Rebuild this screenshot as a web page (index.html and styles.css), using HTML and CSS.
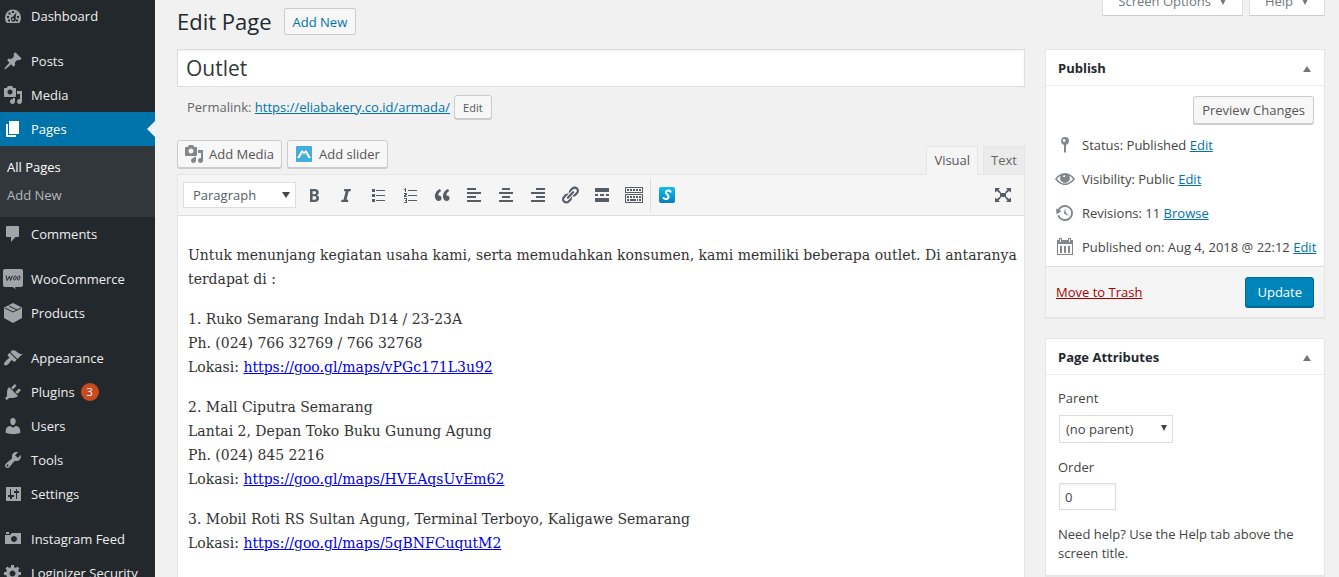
FILE: index.html
```html
<!DOCTYPE html>
<html lang="en">
<head>
<meta charset="utf-8">
<title>Edit Page</title>
<link rel="stylesheet" href="styles.css">
</head>
<body>
<div class="shell">
  <nav class="menu" aria-label="Main menu">
    <ul class="menu-list">
      <li><a class="menu-item" href="#"><svg class="icon" viewBox="0 0 20 20"><path fill-rule="evenodd" d="M3.800 17h12.400c1.300-1.600 1.800-3.400 1.800-5.500a8 8 0 0 0-16 0c0 2.100.4 3.900 1.800 5.500zM9 5h2v2H9zM5.500 6.500h2v2h-2zM4 10h2v2H4zM14 10h2v2h-2zM5 13.500h2v2H5zM13 13.500h2v2h-2zM13.500 6l-3.500 4.800a2.400 2.400 0 1 0 2.500 1.200zM10 12.300a1 1 0 1 1-.1 0z"/></svg>Dashboard</a></li>
      <li class="gap"><a class="menu-item" href="#"><svg class="icon" viewBox="0 0 20 20"><path d="M10.440 3.020l1.820-1.820 6.360 6.350-1.830 1.820c-1.050-.68-2.480-.57-3.410.36l-.75.75c-.92.93-1.040 2.350-.35 3.410l-1.830 1.820-2.410-2.410-2.800 2.790c-.42.42-3.380 2.710-3.800 2.290s1.860-3.390 2.280-3.810l2.790-2.790L4.100 9.360l1.830-1.820c1.050.69 2.480.57 3.400-.36l.75-.75c.93-.92 1.050-2.350.36-3.410z"/></svg>Posts</a></li>
      <li><a class="menu-item" href="#"><svg class="icon" viewBox="0 0 20 20"><use href="#media"/></svg>Media</a></li>
      <li>
        <a class="menu-item current" href="#"><svg class="icon" viewBox="0 0 20 20"><path d="M6 15V2h10v13H6zm-1 1h8v2H3V5h2v11z"/></svg>Pages</a>
        <ul class="submenu">
          <li><a class="active" href="#">All Pages</a></li>
          <li><a href="#">Add New</a></li>
        </ul>
      </li>
      <li><a class="menu-item" href="#"><svg class="icon" viewBox="0 0 20 20"><path d="M4 2h11c.6 0 1 .4 1 1v9c0 .6-.4 1-1 1h-2.500L8 18v-5H4c-.6 0-1-.4-1-1V3c0-.6.4-1 1-1z"/></svg>Comments</a></li>
      <li class="gap"><a class="menu-item" href="#"><svg class="icon" viewBox="0 0 20 20"><path d="M2 0h16a2 2 0 0 1 2 2v14a2 2 0 0 1-2 2h-6l1 2-3.500-2H2a2 2 0 0 1-2-2V2a2 2 0 0 1 2-2z"/><path class="woo" d="M3 6.500l1.200 5L6.500 7l1 4.500L9.500 6.500M12.500 7c-2 0-2.500 4-1 4s2.500-4 1-4zM16.300 7c-2 0-2.500 4-1 4s2.500-4 1-4z"/></svg>WooCommerce</a></li>
      <li><a class="menu-item" href="#"><svg class="icon" viewBox="0 0 20 20"><path d="M10 0l9 4.500v10.500L10 20l-9-5V4.500z"/><path class="seam" d="M2 5l8 4 8-4M6 3l8 4"/></svg>Products</a></li>
      <li class="gap"><a class="menu-item" href="#"><svg class="icon" viewBox="0 0 20 20"><path d="M14.480 11.060L7.410 3.990l1.500-1.500c.5-.56 2.300-.47 3.510.32 1.210.8 1.430 1.280 2.910 2.100 1.180.64 2.450 1.260 4.450.85zm-.71.71L6.700 4.700 4.930 6.470c-.39.39-.39 1.020 0 1.410l1.060 1.060c.39.39.39 1.030 0 1.420-.6.6-1.430 1.110-2.210 1.690-.35.26-.7.53-1.010.84C1.430 14.230.4 16.080 1.400 17.070c.99 1 2.840-.03 4.180-1.360.31-.31.58-.66.85-1.020.57-.78 1.080-1.610 1.690-2.210.39-.39 1.020-.39 1.410 0l1.060 1.060c.39.39 1.020.39 1.410 0z"/></svg>Appearance</a></li>
      <li><a class="menu-item" href="#"><svg class="icon" viewBox="0 0 20 20"><path d="M13.110 4.360L9.870 7.600 8 5.730l3.240-3.240c.35-.34 1.050-.2 1.560.32.52.51.66 1.210.31 1.550zm-8 1.770l.91-1.120 9.010 9.010-1.190.84c-.71.71-2.630 1.160-3.820 1.160H6.140L4.900 17.260c-.59.59-1.540.59-2.120 0-.59-.58-.59-1.530 0-2.120l1.240-1.240v-3.880c0-1.130.4-3.190 1.090-3.890zm7.260 3.970l3.240-3.240c.34-.35 1.040-.21 1.550.31.52.51.66 1.210.31 1.550l-3.240 3.250z"/></svg>Plugins<span class="count">3</span></a></li>
      <li><a class="menu-item" href="#"><svg class="icon" viewBox="0 0 20 20"><path d="M10 9.250c-2.270 0-2.730-3.440-2.730-3.440C7 4.020 7.820 2 9.970 2c2.160 0 2.980 2.020 2.710 3.810 0 0-.41 3.440-2.680 3.440zm0 2.570L12.720 10c2.390 0 4.520 2.330 4.520 4.530v2.490s-3.650 1.130-7.240 1.130c-3.650 0-7.240-1.130-7.240-1.130v-2.490c0-2.250 1.940-4.480 4.470-4.480z"/></svg>Users</a></li>
      <li><a class="menu-item" href="#"><svg class="icon" viewBox="0 0 20 20"><path fill-rule="evenodd" d="M16.680 9.770c-1.340 1.340-3.300 1.670-4.950.99l-5.410 6.520c-.99.99-2.590.99-3.580 0s-.99-2.590 0-3.570l6.520-5.420c-.68-1.650-.35-3.610.99-4.950 1.280-1.280 3.120-1.620 4.720-1.060l-2.890 2.890 2.820 2.820 2.860-2.870c.53 1.580.18 3.390-1.080 4.650zM3.810 16.210c.4.39 1.040.39 1.430 0 .4-.4.4-1.040 0-1.430-.39-.4-1.030-.4-1.430 0-.39.39-.39 1.030 0 1.430z"/></svg>Tools</a></li>
      <li><a class="menu-item" href="#"><svg class="icon" viewBox="0 0 20 20"><path fill-rule="evenodd" d="M3 3h15v14H3zM7 5v6H5v2h2v2h2v-2h2v-2H8V5zM13 5v2h-2v2h2v6h1V9h2V7h-2V5z"/></svg>Settings</a></li>
      <li class="gap"><a class="menu-item" href="#"><svg class="icon" viewBox="0 0 20 20"><path fill-rule="evenodd" d="M6 5V3H3v2h3zm12 10V4H9L7 6H2v9h16zm-7-8c1.660 0 3 1.340 3 3s-1.340 3-3 3-3-1.340-3-3 1.340-3 3-3z"/></svg>Instagram Feed</a></li>
      <li><a class="menu-item" href="#"><svg class="icon" viewBox="0 0 20 20"><path fill-rule="evenodd" d="M18 12h-2.180c-.17.7-.44 1.350-.81 1.930l1.540 1.540-2.100 2.100-1.540-1.540c-.58.36-1.230.63-1.910.79V19H8v-2.180c-.68-.16-1.330-.43-1.910-.79l-1.540 1.540-2.120-2.120 1.540-1.540c-.36-.58-.63-1.230-.79-1.910H1V9.030h2.170c.16-.7.44-1.350.8-1.940L2.430 5.550l2.100-2.100 1.540 1.540c.58-.37 1.240-.64 1.930-.81V2h3v2.180c.68.16 1.330.43 1.910.79l1.540-1.540 2.120 2.120-1.540 1.540c.36.59.64 1.240.8 1.940H18V12zm-8.500 1.500c1.660 0 3-1.340 3-3s-1.340-3-3-3-3 1.340-3 3 1.340 3 3 3z"/></svg>Loginizer Security</a></li>
    </ul>
  </nav>

  <main class="main">
    <header class="page-head">
      <h1>Edit Page</h1>
      <a class="add-new" href="#">Add New</a>
      <div class="screen-tabs">
        <button type="button">Screen Options <svg class="tri" viewBox="0 0 8 8"><path d="M1 1h6L4 7z"/></svg></button>
        <button type="button">Help <svg class="tri" viewBox="0 0 8 8"><path d="M1 1h6L4 7z"/></svg></button>
      </div>
    </header>

    <div class="columns">
      <section class="content">
        <input class="title-input" type="text" value="Outlet" aria-label="Page title">
        <div class="permalink">
          <span>Permalink: <a href="#">https://eliabakery.co.id/armada/</a></span>
          <button class="button small" type="button">Edit</button>
        </div>

        <div class="editor-tools">
          <button class="button" type="button"><svg class="icon" viewBox="0 0 20 20"><path id="media" fill-rule="evenodd" d="M13 11V4c0-.55-.45-1-1-1h-1.670L9 1H5L3.670 3H2c-.55 0-1 .45-1 1v7c0 .55.45 1 1 1h10c.55 0 1-.45 1-1zM7 4.500c1.380 0 2.500 1.120 2.500 2.500S8.380 9.500 7 9.500 4.500 8.380 4.500 7 5.620 4.500 7 4.500zM14 6h5v10.500c0 1.380-1.120 2.500-2.500 2.500S14 17.880 14 16.500s1.120-2.500 2.500-2.500c.17 0 .34.02.5.05V9h-3V6zm-4 8.050V13h2v3.500c0 1.380-1.120 2.500-2.500 2.500S7 17.880 7 16.500 8.120 14 9.500 14c.17 0 .34.02.5.05z"/></svg>Add Media</button>
          <button class="button" type="button"><svg class="icon" viewBox="0 0 20 20"><rect x="2" y="2" width="16" height="16" rx="1" fill="#43addb"/><path d="M3 14l5-8 2 2 2-2 5 8h-3l-3-5-1 2-1-2-3 5z" fill="#fff"/><path d="M6 14l3-5M14 14l-3-5" stroke="#43addb" fill="none"/></svg>Add slider</button>
          <div class="mode-tabs">
            <button class="selected" type="button">Visual</button>
            <button type="button">Text</button>
          </div>
        </div>

        <div class="editor">
          <div class="toolbar">
            <div class="select-wrap format">
              <select aria-label="Format"><option>Paragraph</option></select>
              <svg class="tri" viewBox="0 0 8 8"><path d="M0 1h8L4 7z"/></svg>
            </div>
            <button type="button" aria-label="Bold"><svg viewBox="0 0 20 20"><path fill-rule="evenodd" d="M6 4v13h4.540c1.370 0 2.460-.33 3.260-1 .8-.66 1.200-1.580 1.200-2.770 0-.84-.17-1.510-.51-2.010s-.9-.85-1.670-1.030v-.09c.57-.1 1.020-.4 1.360-.9s.51-1.130.51-1.910c0-1.140-.39-1.980-1.170-2.500C12.750 4.260 11.500 4 9.780 4H6zm2.570 5.150V6.260h1.360c.73 0 1.270.11 1.610.32.34.22.51.58.51 1.070 0 .54-.16.92-.47 1.150s-.82.35-1.510.35h-1.500zm0 2.190h1.600c1.440 0 2.160.53 2.160 1.610 0 .6-.17 1.050-.51 1.340s-.86.43-1.570.43H8.570v-3.380z"/></svg></button>
            <button type="button" aria-label="Italic"><svg viewBox="0 0 20 20"><path d="M15 4l-.5 2.200h-1.800L10.500 14.800h1.900L11.900 17H5l.5-2.200h2L9.700 6.200H7.800L8.300 4z"/></svg></button>
            <button type="button" aria-label="Bulleted list"><svg viewBox="0 0 20 20"><path d="M4 4h3v3H4zM4 9h3v3H4zM4 14h3v3H4zM8 5h9v1H8zM8 10h9v1H8zM8 15h9v1H8z"/></svg></button>
            <button type="button" aria-label="Numbered list"><svg viewBox="0 0 20 20"><path d="M8 5h9v1H8zM8 10h9v1H8zM8 15h9v1H8zM5 3h1v4H5zM4 4h1v1H4zM4 8h3v2H6v1h1v1H4v-2h1V9H4zM4 13h3v5H4v-1h2v-1H5v-1h1v-1H4z"/></svg></button>
            <button type="button" aria-label="Quote"><svg viewBox="0 0 20 20"><path d="M9.490 13.220c0-.74-.2-1.380-.61-1.900-.62-.78-1.830-.88-2.530-.72-.29-1.650 1.110-3.750 2.920-4.650L7.880 4c-2.730 1.300-5.420 4.280-4.960 8.050C3.210 14.430 4.590 16 6.540 16c.85 0 1.560-.25 2.120-.75s.83-1.180.83-2.030zm8.050 0c0-.74-.2-1.380-.61-1.900-.63-.78-1.830-.88-2.530-.72-.29-1.650 1.110-3.750 2.920-4.650L15.930 4c-2.730 1.300-5.410 4.280-4.950 8.050.29 2.380 1.660 3.950 3.610 3.950.85 0 1.560-.25 2.120-.75s.83-1.180.83-2.030z"/></svg></button>
            <button type="button" aria-label="Align left"><svg viewBox="0 0 20 20"><path d="M3 3h9v2H3zM3 7h14v2H3zM3 11h9v2H3zM3 15h14v2H3z"/></svg></button>
            <button type="button" aria-label="Align center"><svg viewBox="0 0 20 20"><path d="M6 3h8v2H6zM3 7h14v2H3zM6 11h8v2H6zM3 15h14v2H3z"/></svg></button>
            <button type="button" aria-label="Align right"><svg viewBox="0 0 20 20"><path d="M8 3h9v2H8zM3 7h14v2H3zM8 11h9v2H8zM3 15h14v2H3z"/></svg></button>
            <button type="button" aria-label="Link"><svg viewBox="0 0 20 20"><path d="M17.740 2.760c1.680 1.690 1.680 4.410 0 6.100l-1.530 1.520c-1.120 1.120-2.700 1.470-4.140 1.090l2.620-2.610.76-.77.76-.76c.84-.84.84-2.200 0-3.040-.84-.85-2.200-.85-3.040 0l-.77.76-3.380 3.380c-.37-1.440-.02-3.020 1.100-4.140l1.520-1.530c1.690-1.680 4.420-1.680 6.100 0zM8.590 13.430l5.340-5.340c.42-.42.42-1.100 0-1.520-.44-.43-1.130-.39-1.530 0l-5.330 5.340c-.42.42-.42 1.100 0 1.520.44.43 1.130.39 1.520 0zm-.76 2.290l4.140-4.150c.38 1.440.03 3.020-1.090 4.140l-1.520 1.530c-1.690 1.680-4.410 1.680-6.100 0-1.680-1.680-1.680-4.420 0-6.100l1.530-1.520c1.120-1.120 2.700-1.470 4.140-1.100l-4.140 4.150c-.85.84-.85 2.200 0 3.050.84.84 2.200.84 3.040 0z"/></svg></button>
            <button type="button" aria-label="Read more"><svg viewBox="0 0 20 20"><path d="M3 3h14v4H3zM3 9h3v2H3zM8 9h4v2H8zM14 9h3v2h-3zM3 13h14v4H3z"/></svg></button>
            <button type="button" aria-label="Toolbar toggle"><svg viewBox="0 0 20 20"><path fill-rule="evenodd" d="M1 2h18v6H1zM2 3v4h16V3zM1 9h18v9H1zM2 10v7h16v-7zM3 4h2v2H3zM6 4h2v2H6zM9 4h2v2H9zM12 4h2v2h-2zM15 4h2v2h-2zM3 11h2v2H3zM6 11h2v2H6zM9 11h2v2H9zM12 11h2v2h-2zM15 11h2v2h-2zM3 14h2v2H3zM6 14h6v2H6zM13 14h1v2h-1zM15 14h2v2h-2z"/></svg></button>
            <span class="divider"></span>
            <button type="button" aria-label="Insert shortcode"><svg viewBox="0 0 20 20"><defs><linearGradient id="sky" x2="0" y2="1"><stop stop-color="#14bfe8"/><stop offset="1" stop-color="#087cc0"/></linearGradient></defs><rect x="2" y="2" width="16" height="16" rx="2" fill="url(#sky)"/><path d="M13.500 7.500c.5-2.500-4.500-2.800-4.500 0 0 2 3 2.300 2.500 4.600-.4 2.700-5 2.400-5 .2" fill="none" stroke="#fff" stroke-width="2"/></svg></button>
            <button class="expand" type="button" aria-label="Full screen"><svg viewBox="0 0 20 20"><path d="M7 8h6v4H7zM2 3h5L5.500 4.500 8 7.500 7 8.500 4 6 2 7.500zM18 3h-5l1.500 1.500L12 7.500l1 1L16 6l2 1.500zM2 17h5l-1.500-1.500L8 12.500l-1-1L4 14l-2-1.500zM18 17h-5l1.500-1.500-2.500-3 1-1 3 2.500 2-1.500z"/></svg></button>
          </div>
          <article class="document">
            <p>Untuk menunjang kegiatan usaha kami, serta memudahkan konsumen, kami memiliki beberapa outlet. Di antaranya terdapat di :</p>
            <p>1. Ruko Semarang Indah D14 / 23-23A<br>Ph. (024) 766 32769 / 766 32768<br>Lokasi: <a href="#">https://goo.gl/maps/vPGc171L3u92</a></p>
            <p>2. Mall Ciputra Semarang<br>Lantai 2, Depan Toko Buku Gunung Agung<br>Ph. (024) 845 2216<br>Lokasi: <a href="#">https://goo.gl/maps/HVEAqsUvEm62</a></p>
            <p>3. Mobil Roti RS Sultan Agung, Terminal Terboyo, Kaligawe Semarang<br>Lokasi: <a href="#">https://goo.gl/maps/5qBNFCuqutM2</a></p>
            <p>4. Mobil Roti Terminal Penggaron, Semarang</p>
          </article>
        </div>
      </section>

      <aside class="side">
        <section class="box">
          <header class="box-head"><h2>Publish</h2><svg class="tri" viewBox="0 0 8 8"><path d="M0 7h8L4 1z"/></svg></header>
          <div class="preview"><button class="button" type="button">Preview Changes</button></div>
          <ul class="facts">
            <li><svg class="icon" viewBox="0 0 20 20"><path fill-rule="evenodd" d="M10 2a4 4 0 0 1 4 4c0 2-1 3-3 4v7l-1 1-1-1v-7c-2-1-3-2-3-4a4 4 0 0 1 4-4zM9 4a1.500 1.500 0 1 0 .1 0z"/></svg><span>Status: Published <a href="#">Edit</a></span></li>
            <li><svg class="icon" viewBox="0 0 20 20"><path fill-rule="evenodd" d="M10 4c4 0 7.500 2.500 10 6-2.500 3.500-6 6-10 6S2.500 13.500 0 10c2.500-3.500 6-6 10-6zM6 6.500C4.500 7.300 3 8.600 2 10c1.800 2.500 4.700 4.500 8 4.500s6.200-2 8-4.500c-1-1.400-2.500-2.700-4-3.500.6.700 1 1.600 1 2.500a5 5 0 0 1-10 0c0-.9.4-1.800 1-2.500zM10 6a2 2 0 0 0-2 2h2z"/></svg><span>Visibility: Public <a href="#">Edit</a></span></li>
            <li><svg class="icon" viewBox="0 0 20 20"><path d="M13.650 2.880c3.930 2.010 5.480 6.840 3.470 10.770s-6.830 5.480-10.770 3.470c-1.870-.96-3.200-2.560-3.860-4.400l1.640-1.030c.45 1.570 1.520 2.950 3.080 3.760 3.010 1.540 6.690.35 8.230-2.660 1.550-3.010.36-6.690-2.650-8.240C9.780 3.010 6.100 4.200 4.560 7.210l1.880.97-4.950 3.080-.39-5.820 1.780.91C4.900 2.400 9.750.89 13.650 2.880zm-4.360 7.830C9.110 10.530 9 10.280 9 10L10 5l.97 4.810L14 13l-4.500-2.120z"/></svg><span>Revisions: 11 <a href="#">Browse</a></span></li>
            <li><svg class="icon" viewBox="0 0 20 20"><path fill-rule="evenodd" d="M2 3h2V1h3v2h6V1h3v2h2v15H2zM3 7v10h14V7zM5 2v3h1V2zM14 2v3h1V2zM5 9h2v7H5zM9 9h2v7H9zM13 9h2v7h-2z"/></svg><span>Published on: Aug 4, 2018 @ 22:12 <a href="#">Edit</a></span></li>
          </ul>
          <footer class="box-foot"><a class="trash" href="#">Move to Trash</a><button class="update" type="button">Update</button></footer>
        </section>

        <section class="box">
          <header class="box-head"><h2>Page Attributes</h2><svg class="tri" viewBox="0 0 8 8"><path d="M0 7h8L4 1z"/></svg></header>
          <div class="attributes">
            <label for="parent">Parent</label>
            <div class="select-wrap parent">
              <select id="parent"><option>(no parent)</option></select>
              <svg class="tri" viewBox="0 0 8 8"><path d="M1 1h6L4 7z"/></svg>
            </div>
            <label for="order">Order</label>
            <input id="order" type="text" value="0">
            <p>Need help? Use the Help tab above the screen title.</p>
          </div>
        </section>
      </aside>
    </div>
  </main>
</div>
</body>
</html>
```
FILE: styles.css
```css
* { box-sizing: border-box; }
body {
  margin: 0;
  height: 100vh;
  overflow: hidden;
  background: #f1f1f1;
  color: #444;
  font: 13px/19px "Open Sans", "Noto Sans", sans-serif;
}
button, input, select { font: inherit; color: inherit; margin: 0; }
ul { list-style: none; margin: 0; padding: 0; }
h1, h2, p { margin: 0; }
a { color: #0073aa; }
svg { display: block; flex: none; fill: currentColor; }
.icon { width: 20px; height: 20px; }
.tri { width: 8px; height: 8px; }

.shell { display: flex; align-items: stretch; min-height: 100%; }

/* Left menu */
.menu { flex: none; width: 155px; background: #23282d; }
.menu-list { margin-top: -1px; }
.gap { margin-top: 11px; }
.menu-item {
  display: flex;
  align-items: center;
  gap: 8px;
  height: 34px;
  padding-left: 3px;
  color: #eee;
  text-decoration: none;
  white-space: nowrap;
}
.menu-item .icon { color: #a0a5aa; }
.menu-item.current { position: relative; background: #0073aa; color: #fff; }
.menu-item.current .icon { color: #fff; }
.menu-item.current::after {
  content: "";
  position: absolute;
  right: 0;
  top: 9px;
  border: 8px solid transparent;
  border-left: 0;
  border-right-color: #f1f1f1;
}
.woo { fill: none; stroke: #23282d; stroke-width: 1; }
.seam { fill: none; stroke: #23282d; stroke-width: 1; }
.submenu { padding: 7px 0 8px; background: #32373c; }
.submenu a {
  display: block;
  padding-left: 7px;
  line-height: 28px;
  color: #b4b9be;
  text-decoration: none;
}
.submenu .active { color: #fff; }
.count {
  width: 18px;
  margin-left: -2px;
  border-radius: 9px;
  background: #ca4a1f;
  color: #fff;
  font-size: 11px;
  line-height: 18px;
  text-align: center;
}

/* Page heading */
.main { flex: 1; min-width: 0; padding: 0 14px 0 22px; }
.page-head { display: flex; align-items: flex-start; height: 49px; }
.page-head h1 { padding-top: 7px; color: #23282d; font-size: 22px; font-weight: 400; line-height: 28px; }
.add-new {
  margin: 8px 0 0 12px;
  padding: 1px 8px 0;
  border: 1px solid #ccc;
  border-radius: 2px;
  background: #f7f7f7;
  line-height: 24px;
  text-decoration: none;
}
.screen-tabs { display: flex; gap: 6px; margin: -12px 0 0 auto; }
.screen-tabs button {
  display: flex;
  align-items: center;
  gap: 8px;
  height: 28px;
  padding: 0 15px;
  border: 1px solid #ddd;
  border-top: 0;
  border-bottom-color: #ccc;
  background: #fff;
  color: #72777c;
}

.columns { display: grid; grid-template-columns: minmax(0, 1fr) 280px; gap: 20px; align-items: start; }

.title-input {
  display: block;
  width: 100%;
  height: 38px;
  padding: 0 8px;
  border: 1px solid #ddd;
  background: #fff;
  box-shadow: inset 0 1px 2px rgba(0, 0, 0, .07);
  color: #32373c;
  font-size: 21px;
}
.permalink { display: flex; align-items: center; gap: 4px; padding: 8px 0 0 10px; color: #666; }

.button {
  display: flex;
  align-items: center;
  gap: 4px;
  height: 28px;
  padding: 0 8px;
  border: 1px solid #ccc;
  border-radius: 3px;
  background: #f7f7f7;
  box-shadow: 0 1px 0 #ccc;
  color: #555;
  white-space: nowrap;
}
.button.small { height: 24px; font-size: 11px; }
.button .icon { color: #82878c; }

.editor-tools { display: flex; align-items: flex-start; gap: 5px; padding-top: 21px; }
.editor-tools .button { padding: 0 7px 0 6px; gap: 5px; }
.mode-tabs { display: flex; gap: 5px; margin: 6px 0 -1px auto; }
.mode-tabs button {
  height: 29px;
  padding: 0 7px;
  border: 1px solid #e5e5e5;
  background: #ebebeb;
  color: #666;
}
.mode-tabs .selected { position: relative; border-bottom-color: #f5f5f5; background: #f5f5f5; color: #555; }

.editor { border: 1px solid #e5e5e5; background: #fff; }
.toolbar {
  display: flex;
  align-items: center;
  gap: 8px;
  height: 41px;
  padding: 0 9px 0 5px;
  border-bottom: 1px solid #ddd;
  background: #f5f5f5;
}
.toolbar button { flex: none; width: 24px; height: 24px; padding: 2px; border: 0; background: none; color: #555d66; }
.toolbar svg { width: 20px; height: 20px; }
.toolbar .expand { margin-left: auto; }
.divider { width: 1px; height: 34px; margin: 0 -4px; background: #ddd; }

.select-wrap { position: relative; }
.select-wrap select {
  display: block;
  width: 100%;
  appearance: none;
  border: 1px solid #ddd;
  border-radius: 0;
  background: #fff;
}
.select-wrap .tri { position: absolute; right: 6px; top: 9px; width: 8px; height: 8px; pointer-events: none; }
.format { width: 113px; margin-right: -2px; }
.format select { height: 26px; padding: 0 9px; color: #555d66; }
.parent { width: 114px; }
.parent select { height: 28px; padding: 0 6px; }
.parent .tri { right: 5px; }

.document { padding: 27px 0 0 10px; color: #333; font: 14px/24px "DejaVu Serif", serif; }
.document p { margin-bottom: 16px; }
.document a { color: #00e; }

/* Side boxes */
.side { display: grid; gap: 20px; }
.box { border: 1px solid #e5e5e5; background: #fff; box-shadow: 0 1px 1px rgba(0, 0, 0, .04); }
.box-head {
  display: flex;
  align-items: center;
  justify-content: space-between;
  height: 36px;
  padding: 2px 13px 0 12px;
  border-bottom: 1px solid #eee;
}
.box-head h2 { color: #23282d; font-size: 13px; }
.box-head .tri { color: #72777c; }
.preview { display: flex; justify-content: flex-end; padding: 10px 10px 0; }
.facts { padding: 4px 0 2px; }
.facts li { display: flex; align-items: center; gap: 7px; height: 34px; padding-left: 9px; white-space: nowrap; }
.facts .icon { color: #82878c; }
.box-foot {
  display: flex;
  align-items: center;
  justify-content: space-between;
  padding: 10px;
  border-top: 1px solid #ddd;
  background: #f5f5f5;
}
.trash { color: #a00; }
.update {
  height: 30px;
  padding: 0 11px;
  border: 1px solid #006799;
  border-radius: 3px;
  background: #0085ba;
  box-shadow: 0 1px 0 #006799;
  color: #fff;
}
.attributes { display: grid; justify-items: start; padding: 14px 13px 12px 12px; }
.attributes .select-wrap { margin: 7px 1px 15px; }
.attributes input {
  width: 57px;
  height: 27px;
  margin: 6px 1px 15px;
  padding: 0 5px;
  border: 1px solid #ddd;
  box-shadow: inset 0 1px 2px rgba(0, 0, 0, .07);
}
```
